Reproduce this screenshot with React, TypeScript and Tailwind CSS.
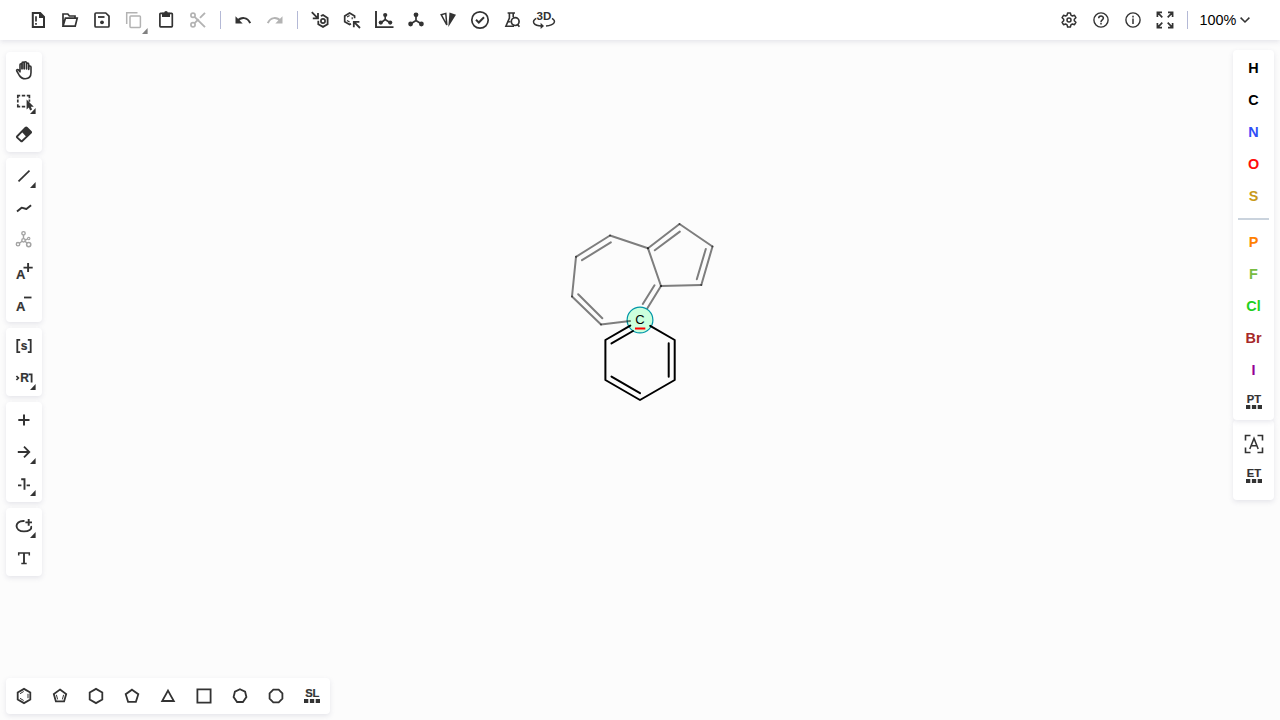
import type { ReactNode } from "react";

const INK = "#333333";

function Icon({ children, className = "" }: { children: ReactNode; className?: string }) {
  return (
    <svg
      width="24"
      height="24"
      viewBox="0 0 24 24"
      fill="none"
      stroke="currentColor"
      strokeWidth="1.8"
      className={`shrink-0 ${className}`}
    >
      {children}
    </svg>
  );
}

const solid = { fill: "currentColor", stroke: "none" };

function Caption({ x, y, size, children }: { x: number; y: number; size: number; children: string }) {
  return (
    <text
      x={x}
      y={y}
      fontSize={size}
      textAnchor="middle"
      fill="currentColor"
      stroke="currentColor"
      strokeWidth=".2"
      className="font-['Liberation_Sans',Arial,sans-serif] font-bold"
    >
      {children}
    </text>
  );
}

function Dots() {
  return <path {...solid} d="M4 15h4.3v4H4zM9.9 15h4.3v4H9.9zM15.7 15H20v4h-4.3z" />;
}

const icons: Record<string, ReactNode> = {
  file: (
    <Icon>
      <path strokeWidth="2" d="M6.8 5h7.4L18 8.8V19H6.8z" />
      <path {...solid} d="M13 4.2 18.8 10H13z" />
      <path strokeWidth="1.7" d="M10 8.2v5.3M10 15v1.7" />
    </Icon>
  ),
  open: (
    <Icon>
      <path strokeWidth="1.7" d="M5 18V6h4.8l1.6 2H17v2.2M5 18.2 7.4 10.2H19.2L17.2 18.2H5z" />
    </Icon>
  ),
  save: (
    <Icon>
      <path strokeWidth="1.7" strokeLinejoin="round" d="M5 6q0-1 1-1h9.8L19 8.2V18q0 1-1 1H6q-1 0-1-1z" />
      <path strokeWidth="1.8" d="M8 9h6.5" />
      <circle {...solid} cx="12" cy="14.3" r="1.9" />
    </Icon>
  ),
  copy: (
    <Icon className="text-[#b3b3b3]">
      <path strokeWidth="1.5" d="M4.7 16V4.7H15.5" />
      <rect strokeWidth="1.5" x="8" y="8" width="10.4" height="11.4" rx=".8" />
    </Icon>
  ),
  paste: (
    <Icon>
      <rect strokeWidth="1.7" x="5.9" y="5.4" width="12.4" height="13.4" rx=".7" />
      <path {...solid} d="M8 4.8h2.2a1.8 1.8 0 0 1 3.6 0H16V9H8z" />
    </Icon>
  ),
  cut: (
    <Icon className="text-[#b3b3b3]">
      <circle strokeWidth="1.7" cx="7" cy="7.3" r="2.1" />
      <circle strokeWidth="1.7" cx="7" cy="16.7" r="2.1" />
      <path strokeWidth="1.9" d="M8.6 8.8 19 19.2M8.6 15.2l4-4M14 9.8l5-5" />
    </Icon>
  ),
  undo: (
    <Icon>
      <path strokeWidth="2" d="M6.5 13C10 8.8 16.5 8.8 19.2 15.2" />
      <path {...solid} d="M4.5 8.2v7.3h7.2z" />
    </Icon>
  ),
  redo: (
    <Icon className="text-[#b3b3b3]">
      <path strokeWidth="2" d="M17.5 13C14 8.8 7.5 8.8 4.8 15.2" />
      <path {...solid} d="M19.5 8.2v7.3h-7.2z" />
    </Icon>
  ),
  arom: (
    <Icon>
      <path strokeWidth="1.8" d="M12.8 8 15 7.1 19.6 10v6.2L15 18.9l-4.7-2.7v-3.4" />
      <circle strokeWidth="1.7" cx="15" cy="13" r="2.1" />
      <path strokeWidth="1.8" d="m3.8 4.2 5.4 5.4M10 5v5.3H4.8" />
    </Icon>
  ),
  dearom: (
    <Icon>
      <path strokeWidth="1.7" d="M11 15.8 9.6 16.6 4.7 13.8V7.9L9.6 5l5 2.9v2.4" />
      <path strokeWidth="1.2" d="M7 9.1 9.6 7.6M7 12.5l2.6 1.5M12.2 9.2v2" />
      <path strokeWidth="1.8" d="m20 20-5.6-5.6M13.8 19.2v-5.4H19.4" />
    </Icon>
  ),
  layout: (
    <Icon>
      <path strokeWidth="1.9" d="M4 3v16.1h17.5" />
      <path strokeWidth="1.6" d="M13.2 7v4.5L8.7 15M13.2 11.5l5.3 3.5" />
      <circle {...solid} cx="13.2" cy="7" r="2.1" />
      <circle {...solid} cx="8.8" cy="14.6" r="2.1" />
      <circle {...solid} cx="18.2" cy="14.6" r="2.1" />
    </Icon>
  ),
  clean: (
    <Icon>
      <path strokeWidth="1.7" d="M12 7v5.5L6.5 16M12 12.5l5.5 3.5" />
      <circle {...solid} cx="12" cy="6.8" r="2.4" />
      <circle {...solid} cx="6.6" cy="16" r="2.4" />
      <circle {...solid} cx="17.4" cy="16" r="2.4" />
    </Icon>
  ),
  cip: (
    <Icon>
      <path strokeWidth="1.5" d="M5.2 6.7 9.8 5.4 10.8 17z" />
      <path {...solid} d="M13.5 4.5 20 6.8 12.3 19z" />
    </Icon>
  ),
  check: (
    <Icon>
      <circle strokeWidth="1.7" cx="12" cy="12" r="8.2" />
      <path strokeWidth="2" d="m8 11.8 2.8 2.7 5.2-5.2" />
    </Icon>
  ),
  flask: (
    <Icon>
      <path strokeWidth="1.6" d="M7.6 5H15M9.4 5v5L5.9 18.3H14M13.2 5v4" />
      <path strokeWidth="1.4" d="M7.5 13.8h3" />
      <circle strokeWidth="1.7" cx="15.2" cy="13.6" r="3.9" />
      <path strokeWidth="1.7" d="m17.6 16.4 1.8 2.4" />
    </Icon>
  ),
  threeD: (
    <Icon className="overflow-visible">
      <text x="12" y="12.4" fontSize="11.6" textAnchor="middle" {...solid} className="font-['Liberation_Sans',Arial,sans-serif] font-bold">
        3D
      </text>
      <path strokeWidth="1.5" d="M4.2 10.3C-.6 13 .8 17.8 10 18M20 10.3C24.6 13 22.8 17.2 14 18.1" />
      <path {...solid} d="m8.6 14.8 3.4 3.2-3.4 3z" />
    </Icon>
  ),
  gear: (
    <Icon>
      <path
        strokeWidth="1.5"
        strokeLinejoin="round"
        d="M10.6 5h2.8l.5 2.1 1.5.9 2.1-.7 1.4 2.4-1.6 1.5v1.6l1.6 1.5-1.4 2.4-2.1-.7-1.5.9-.5 2.1h-2.8l-.5-2.1-1.5-.9-2.1.7-1.4-2.4 1.6-1.5v-1.6L5.1 9.7l1.4-2.4 2.1.7 1.5-.9z"
      />
      <circle strokeWidth="1.5" cx="12" cy="12" r="2" />
    </Icon>
  ),
  help: (
    <Icon>
      <circle strokeWidth="1.4" cx="12" cy="12" r="7.1" />
      <path strokeWidth="1.5" d="M9.7 10.3c0-3 4.7-2.9 4.7-.2 0 1.7-2.4 1.8-2.4 3.8M12 14.8v1.6" />
    </Icon>
  ),
  info: (
    <Icon>
      <circle strokeWidth="1.4" cx="12" cy="12" r="7.1" />
      <path strokeWidth="1.5" d="M12 10.5V16M12 7.8v1.6" />
    </Icon>
  ),
  fullscreen: (
    <Icon>
      <path
        strokeWidth="1.7"
        d="M4.4 9V4.4H9M15 4.4h4.6V9M19.6 15v4.6H15M9 19.6H4.4V15M4.7 4.7l4.6 4.6M19.3 4.7l-4.6 4.6M19.3 19.3l-4.6-4.6M4.7 19.3l4.6-4.6"
      />
    </Icon>
  ),
  hand: (
    <Icon>
      <path
        strokeWidth="1.6"
        strokeLinejoin="round"
        strokeLinecap="round"
        d="M8 13.8V6.8c0-1.4 2-1.4 2 0V11 5.2c0-1.5 2.2-1.5 2.2 0V11 4.8c0-1.5 2.3-1.5 2.3 0V11 6.2c0-1.4 2.2-1.4 2.2 0V11.5 9c0-1.4 2.3-1.4 2.3 0v5.5c0 4-2.4 6.2-5.8 6.2-3.2 0-4.6-1.3-6-3.5L4.8 13c-.7-1.2.8-2 1.7-1.1z"
      />
      <path strokeWidth="1.2" d="M10 5.5V11M12.2 5V11M14.5 5V11M16.7 7V11" />
    </Icon>
  ),
  select: (
    <Icon>
      <path
        strokeWidth="1.7"
        d="M5.8 8.2V5.7H8.2M9.8 5.7h3.4M14.8 5.7h2.6v2.5M17.4 9.6v2.2M5.8 9.6v3M5.8 14.2v2.4h2.4M9.8 16.6h3.4"
      />
      <path {...solid} d="M14.6 9.6v9.8l2.2-2 1.3 3 2-.9-1.3-2.8h3z" />
    </Icon>
  ),
  erase: (
    <Icon>
      <path strokeWidth="1.8" strokeLinejoin="round" d="m5 14.5 8.6-8.8q.6-.6 1.2 0l4 4q.6.6 0 1.2l-8.6 8.1q-.6.6-1.2 0L5 15.4q-.4-.5 0-.9z" />
      <path {...solid} d="m9.7 9.8 4.5-4.6 5.3 5.3-4.8 4.8z" />
    </Icon>
  ),
  bond: (
    <Icon>
      <path strokeWidth="1.7" d="M6.5 17.4 17.5 6.6" />
    </Icon>
  ),
  chain: (
    <Icon>
      <path strokeWidth="1.9" strokeLinejoin="round" d="m5 15.5 4.6-3.8 4.8 1.3 4.7-3.8" />
    </Icon>
  ),
  stereo: (
    <Icon className="text-[#a3a3a3]">
      <circle strokeWidth="1.4" cx="11.5" cy="5.3" r="1.7" />
      <circle strokeWidth="1.4" cx="11.5" cy="12.3" r="1.7" />
      <circle strokeWidth="1.4" cx="6" cy="16.2" r="1.7" />
      <circle strokeWidth="1.5" cx="16.7" cy="16.6" r="2.1" />
      <circle strokeWidth="1.1" cx="16.7" cy="10.6" r="1.2" />
      <path strokeWidth="1.4" d="M11.5 7v3.6M10 13.3l-2.5 1.9M13 13.3l2.2 1.9M13.2 12l2.3-.9" />
    </Icon>
  ),
  plusCharge: (
    <Icon>
      <Caption x={8.8} y={19} size={13}>A</Caption>
      <path strokeWidth="1.9" d="M11.5 7.6h9.2M16.1 3.1v9" />
    </Icon>
  ),
  minusCharge: (
    <Icon>
      <Caption x={8.8} y={19} size={13}>A</Caption>
      <path strokeWidth="1.8" d="M12 5.5h7.5" />
    </Icon>
  ),
  sgroup: (
    <Icon>
      <path strokeWidth="1.8" d="M8.2 5.9H5.3v12.2h2.9M15.8 5.9h2.9v12.2h-2.9" />
      <Caption x={12} y={15.6} size={12}>s</Caption>
    </Icon>
  ),
  rgroup: (
    <Icon className="overflow-visible">
      <path strokeWidth="1.7" d="m4.4 10 2 2-2 2" />
      <Caption x={12.6} y={16.3} size={12}>R</Caption>
      <path strokeWidth="1.8" d="M16.6 8.4h3v8.1" />
    </Icon>
  ),
  plus: (
    <Icon>
      <path strokeWidth="2" d="M6.3 12h11.2M12 6.4v11.2" />
    </Icon>
  ),
  arrow: (
    <Icon>
      <path strokeWidth="1.8" d="M5.8 12H17M12 6.6l5.3 5.4-5.3 5.4" />
    </Icon>
  ),
  mapping: (
    <Icon>
      <path strokeWidth="1.9" d="M6 13.4h3.4M9.2 7.2h3.3v10.6M14.6 13.4H18" />
    </Icon>
  ),
  ellipse: (
    <Icon>
      <path strokeWidth="1.9" strokeLinecap="round" d="M11.8 7C2 6.6 2.2 17.4 12 17.4c5 0 7.9-2.1 7.2-4.6" />
      <path strokeWidth="1.9" d="M13.4 8.4h6.6M16.7 5.1v6.6" />
    </Icon>
  ),
  text: (
    <Icon>
      <path strokeWidth="1.5" d="M6.7 9.6V6.9h10.6v2.7M9.3 17.6h5.4" />
      <path strokeWidth="1.9" d="M12 6.9v10.7" />
    </Icon>
  ),
  benzene: (
    <Icon>
      <path d="m12 4.9 6.3 3.6v7L12 19.1l-6.3-3.6v-7z" />
      <path strokeWidth="1" d="M8 9.7 11.7 7.5M8 14.3l3.7 2.2M16 9.8v4.4" />
    </Icon>
  ),
  cyclopentadiene: (
    <Icon>
      <path d="m12 5.5 6.2 4.5-2.1 7.4H7.9L5.8 10z" />
      <path strokeWidth="1" d="m8.4 10.8 1.2 4.6M15.6 10.8l-1.2 4.6" />
    </Icon>
  ),
  hexagon: (
    <Icon>
      <path d="m12 4.9 6.3 3.6v7L12 19.1l-6.3-3.6v-7z" />
    </Icon>
  ),
  pentagon: (
    <Icon>
      <path d="m12 5.7 6.3 4.5-2.4 7.6H8.1l-2.4-7.6z" />
    </Icon>
  ),
  triangle: (
    <Icon>
      <path d="M12 6.6 17.8 17H6.2z" />
    </Icon>
  ),
  square: (
    <Icon>
      <path strokeWidth="1.8" d="M5.4 5.4h13.2v13.2H5.4z" />
    </Icon>
  ),
  heptagon: (
    <Icon>
      <path d="m12 5.3 5.1 2.4 1.3 5.4-3.5 4.9H9.1l-3.5-4.9 1.3-5.4z" />
    </Icon>
  ),
  octagon: (
    <Icon>
      <path d="M9.3 5.6h5.4l3.7 3.7v5.4l-3.7 3.7H9.3l-3.7-3.7V9.3z" />
    </Icon>
  ),
  library: (
    <Icon>
      <Caption x={12.3} y={13} size={11.2}>SL</Caption>
      <Dots />
    </Icon>
  ),
  periodic: (
    <Icon>
      <Caption x={12} y={13.2} size={11.2}>PT</Caption>
      <Dots />
    </Icon>
  ),
  extended: (
    <Icon>
      <Caption x={12} y={13.2} size={11.2}>ET</Caption>
      <Dots />
    </Icon>
  ),
  anyAtom: (
    <Icon>
      <path strokeWidth="1.6" d="M3.5 8.5v-5h5M15.5 3.5h5v5M20.5 15.5v5h-5M8.5 20.5h-5v-5" />
      <path strokeWidth="1.5" d="m7.8 17 4.2-10.6L16.2 17M9.2 13.8h5.6" />
    </Icon>
  ),
};

function Tool({ name, more = false, className = "" }: { name: string; more?: boolean; className?: string }) {
  return (
    <button aria-label={name} className={`relative flex h-8 shrink-0 items-center justify-center ${className}`}>
      {icons[name]}
      {more && <Corner />}
    </button>
  );
}

function Corner({ className = "right-1.5 bottom-1" }: { className?: string }) {
  return (
    <svg width="6" height="6" viewBox="0 0 6 6" fill="currentColor" className={`absolute ${className}`}>
      <path d="M5.6 0v6H0z" />
    </svg>
  );
}

function Divider() {
  return <div className="mx-1.5 h-[18px] w-px bg-[#b4b9d6]" />;
}

const PANEL = "bg-white shadow-[0_2px_5px_rgba(103,104,132,0.15)]";

const groups: [string, boolean][][] = [
  [["hand", false], ["select", true], ["erase", false]],
  [["bond", true], ["chain", false], ["stereo", false], ["plusCharge", false], ["minusCharge", false]],
  [["sgroup", false], ["rgroup", true]],
  [["plus", false], ["arrow", true], ["mapping", true]],
  [["ellipse", true], ["text", false]],
];

const templates = ["benzene", "cyclopentadiene", "hexagon", "pentagon", "triangle", "square", "heptagon", "octagon", "library"];

function Atom({ symbol, color }: { symbol: string; color: string }) {
  return (
    <button className={`flex h-8 items-center justify-center text-[14.4px] leading-5 font-bold ${color}`}>
      {symbol}
    </button>
  );
}

function Molecule() {
  return (
    <svg width="160" height="190" viewBox="560 215 160 190" fill="none" className="absolute top-[215px] left-[560px]">
      <circle cx="640" cy="320" r="12.9" fill="#ccffdd" stroke="#0097a8" strokeWidth="1.2" />
      <g stroke="#000" strokeOpacity=".5" strokeWidth="2" strokeLinecap="round">
        <path d="M610 235.5 648 248.3" />
        <path d="M648 248.3 661 286" />
        <path d="M661 286 647.5 308" />
        <path d="M630 321 601 324.5" />
        <path d="M601 324.5 572 296.5" />
        <path d="M572 296.5 576 256.8" />
        <path d="M576 256.8 610 235.5" />
        <path d="M648 248.3 679.5 224" />
        <path d="M679.5 224 712.5 246.5" />
        <path d="M712.5 246.5 701.3 285" />
        <path d="M701.3 285 661 286" />
        <path d="M582 260.2 610.8 242.3M654.8 250.3 679.8 231.6M705.8 249 696.8 279.2M654.5 285.3 642.8 304M578.2 294.3 602.3 318.2" />
      </g>
      <g stroke="#000" strokeWidth="2" strokeLinecap="round" strokeLinejoin="round">
        <path d="M630.3 325.6 605.4 340v40L640 400l34.7-20v-40l-24.5-14.2" />
        <path d="M611.5 343.4 633 331M668.7 343.3v33.4M611.5 376.6 640 393.2" />
      </g>
      <path d="M635 328.5h10.3" stroke="#f00" strokeWidth="2" />
      <text x="640" y="324.3" textAnchor="middle" fontSize="13" fill="#000">
        C
      </text>
    </svg>
  );
}

export default function App() {
  return (
    <div className="relative flex h-screen w-full flex-col overflow-hidden bg-[#fcfcfc] font-['Liberation_Sans',Arial,sans-serif] text-[#333333]">
      <Molecule />
      <header className={`relative flex h-10 shrink-0 items-center justify-between pr-7 pl-[22px] ${PANEL}`}>
        <div className="flex items-center">
          <Tool name="file" className="w-8" />
          <Tool name="open" className="w-8" />
          <Tool name="save" className="w-8" />
          <div className="relative flex text-[#808080]">
            <Tool name="copy" className="w-8" />
            <Corner className="right-0.5 bottom-0.5" />
          </div>
          <Tool name="paste" className="w-8" />
          <Tool name="cut" className="w-8" />
          <Divider />
          <Tool name="undo" className="w-8" />
          <Tool name="redo" className="w-8" />
          <Divider />
          {["arom", "dearom", "layout", "clean", "cip", "check", "flask", "threeD"].map((n) => (
            <Tool key={n} name={n} className="w-8" />
          ))}
        </div>
        <div className="flex items-center">
          {["gear", "help", "info", "fullscreen"].map((n) => (
            <Tool key={n} name={n} className="w-8" />
          ))}
          <Divider />
          <button className="flex items-center pl-[5.5px] text-black">
            <span className="w-[37px] text-[14.4px] leading-5">100%</span>
            <svg width="14" height="10" viewBox="0 0 14 10" fill="none" stroke={INK} strokeWidth="1.5" className="ml-[1.5px]">
              <path d="m2.6 2.6 4.4 4.4 4.4-4.4" />
            </svg>
          </button>
        </div>
      </header>

      <main className="relative flex min-h-0 flex-1 items-start justify-between pr-1.5 pl-1.5">
        <nav className="flex w-9 flex-col gap-1.5 pt-3">
          {groups.map((group, i) => (
            <div key={i} className={`flex flex-col rounded-[4px] py-0.5 ${PANEL}`}>
              {group.map(([name, more]) => (
                <Tool key={name} name={name} more={more} className="w-9" />
              ))}
            </div>
          ))}
        </nav>
        <aside className="flex w-[41px] flex-col pt-2.5">
          <div className={`relative z-10 flex h-[370px] flex-col rounded-[4px] pt-0.5 ${PANEL}`}>
            <Atom symbol="H" color="text-black" />
            <Atom symbol="C" color="text-black" />
            <Atom symbol="N" color="text-[#304ff7]" />
            <Atom symbol="O" color="text-[#ff0d0d]" />
            <Atom symbol="S" color="text-[#c99a19]" />
            <div className="mx-[5px] mt-1.5 mb-1.5 h-0.5 shrink-0 bg-[#cad3dd]" />
            <Atom symbol="P" color="text-[#ff8000]" />
            <Atom symbol="F" color="text-[#78bc42]" />
            <Atom symbol="Cl" color="text-[#1fd01f]" />
            <Atom symbol="Br" color="text-[#a62929]" />
            <Atom symbol="I" color="text-[#940094]" />
            <Tool name="periodic" className="w-[41px]" />
          </div>
          <div className={`flex h-20 flex-col rounded-[4px] pt-2 ${PANEL}`}>
            <Tool name="anyAtom" className="w-[41px]" />
            <Tool name="extended" className="w-[41px]" />
          </div>
        </aside>
      </main>

      <footer className="relative flex shrink-0 px-1.5 pb-1.5">
        <div className={`flex h-9 items-center rounded-[4px] ${PANEL}`}>
          {templates.map((n) => (
            <Tool key={n} name={n} className="w-9" />
          ))}
        </div>
      </footer>
    </div>
  );
}
